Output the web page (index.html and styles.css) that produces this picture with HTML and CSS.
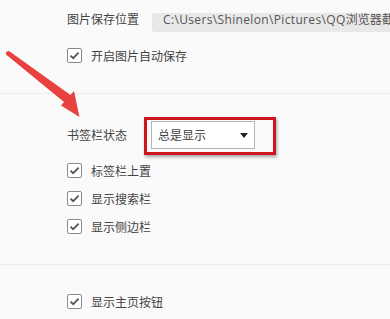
FILE: index.html
```html
<!DOCTYPE html>
<html>
<head>
	<meta charset="UTF-8">
	<title>设置</title>
	<link rel="stylesheet" href="styles.css">
</head>
<body>
	<div class="page">
		<div class="sec sec1">
			<div class="path_row">
				<span class="label">图片保存位置</span>
				<div class="path">C:\Users\Shinelon\Pictures\QQ<span class="cn">浏览器截图</span></div>
			</div>
			<div class="check first"><span class="box"><svg width="11" height="9" viewBox="0 0 11 9"><path d="M1.5 4.6 L4.2 7.2 L9.6 1.6" fill="none" stroke="#555" stroke-width="1.8"/></svg></span>开启图片自动保存</div>
		</div>
		<div class="sec sec2">
			<div class="select_row">
				<span class="label">书签栏状态</span>
				<div class="select">总是显示<i class="caret"></i></div>
				<div class="mark"></div>
			</div>
			<div class="check"><span class="box"><svg width="11" height="9" viewBox="0 0 11 9"><path d="M1.5 4.6 L4.2 7.2 L9.6 1.6" fill="none" stroke="#555" stroke-width="1.8"/></svg></span>标签栏上置</div>
			<div class="check"><span class="box"><svg width="11" height="9" viewBox="0 0 11 9"><path d="M1.5 4.6 L4.2 7.2 L9.6 1.6" fill="none" stroke="#555" stroke-width="1.8"/></svg></span>显示搜索栏</div>
			<div class="check"><span class="box"><svg width="11" height="9" viewBox="0 0 11 9"><path d="M1.5 4.6 L4.2 7.2 L9.6 1.6" fill="none" stroke="#555" stroke-width="1.8"/></svg></span>显示侧边栏</div>
		</div>
		<div class="sec sec3">
			<div class="check"><span class="box"><svg width="11" height="9" viewBox="0 0 11 9"><path d="M1.5 4.6 L4.2 7.2 L9.6 1.6" fill="none" stroke="#555" stroke-width="1.8"/></svg></span>显示主页按钮</div>
		</div>
		<!-- 红色箭头标注 -->
		<svg class="arrow" width="90" height="125" viewBox="0 0 90 125">
			<polygon points="6,52 9,51 70.5,95 74,91 79.5,117 61,105.5 64,102 6,54.5" fill="#e8413f"/>
		</svg>
	</div>
</body>
</html>
```

FILE: styles.css
```css
body{
	margin: 0;
	background: #fafafa;
	font-family: "Noto Sans CJK SC", "Liberation Sans", sans-serif;
	font-size: 12px;
	color: #444;
}
.page{
	width: 390px;
	height: 319px;
	overflow: hidden;
	position: relative;
}
.sec{
	padding-left: 67px;
	border-bottom: 1px solid #ebebeb;
}
.sec1{
	padding-top: 13px;
	padding-bottom: 24px;
}
.path_row{
	display: flex;
	height: 19px;
}
.label{
	width: 85px;
	flex-shrink: 0;
	line-height: 12px;
}
.path{
	flex: 1;
	background: #e8e8e8;
	border-radius: 3px 0 0 3px;
	padding-left: 11px;
	line-height: 12px;
	white-space: nowrap;
	overflow: hidden;
	color: #555;
	font-family: "Open Sans", "Noto Sans CJK SC", sans-serif;
	letter-spacing: 0.35px;
}
.path .cn{
	letter-spacing: 0;
	font-family: "Noto Sans CJK SC", sans-serif;
}
.check{
	display: flex;
	align-items: center;
	height: 28px;
}
.check.first{
	margin-top: 9px;
}
.box{
	width: 13px;
	height: 13px;
	border: 1px solid #8a8a8a;
	border-radius: 2px;
	background: #fff;
	margin-right: 9px;
	display: flex;
	align-items: center;
	justify-content: center;
}
.sec2{
	padding-top: 27px;
	padding-bottom: 24px;
}
.select_row{
	display: flex;
	align-items: center;
	height: 28px;
	margin-bottom: 7px;
	position: relative;
}
.select_row .label{
	width: 84px;
	line-height: 28px;
}
.select{
	width: 96px;
	height: 26px;
	border: 1px solid #b4b4b4;
	background: #fff;
	padding-left: 6px;
	line-height: 26px;
	display: flex;
	align-items: center;
	justify-content: space-between;
}
.caret{
	width: 0;
	height: 0;
	border-left: 4px solid transparent;
	border-right: 4px solid transparent;
	border-top: 5px solid #222;
	margin-right: 6px;
}
.mark{
	position: absolute;
	left: 77px;
	top: -4px;
	width: 126px;
	height: 32px;
	border: 3px solid #cf161d;
	box-shadow: 1px 2px 3px rgba(0,0,0,.35);
}
.sec3{
	border-bottom: none;
	padding-top: 22px;
}
.arrow{
	position: absolute;
	left: 0;
	top: 0;
}
```
